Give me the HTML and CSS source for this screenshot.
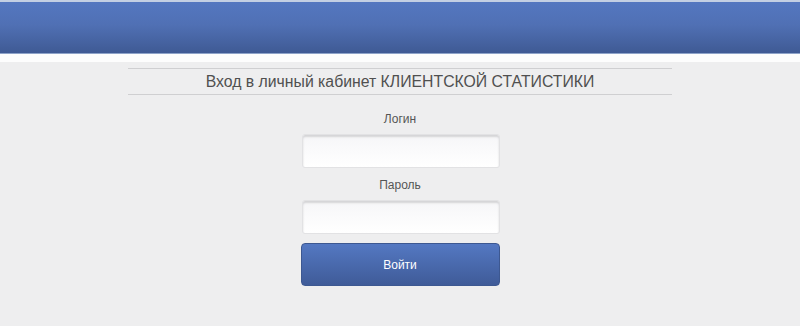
FILE: index.html
```html
<!DOCTYPE html>
<html lang="ru">
<head>
    <meta charset="UTF-8">
    <title>Вход в личный кабинет</title>
    <link rel="stylesheet" href="styles.css">
</head>
<body>
    <div class="header"></div>
    <div class="main">
        <h1 class="title">Вход в личный кабинет КЛИЕНТСКОЙ СТАТИСТИКИ</h1>
        <form class="login-form">
            <label class="field-label" for="login">Логин</label>
            <input class="field" type="text" id="login">
            <label class="field-label" for="password">Пароль</label>
            <input class="field field-last" type="password" id="password">
            <button class="submit" type="button">Войти</button>
        </form>
    </div>
</body>
</html>
```

FILE: styles.css
```css
html, body {
    margin: 0;
    padding: 0;
}
body {
    background-color: #eeeeef;
    font-family: "Liberation Sans", Arial, sans-serif;
}
.header {
    height: 51px;
    border-top: 2px solid #c3cfe3;
    border-bottom: 1px solid #8ea3c9;
    background: linear-gradient(to bottom, #5477c0 0%, #5070b4 45%, #3f5a94 100%);
    margin-bottom: 8px;
    box-shadow: 0 8px 0 #fdfdfd;
}
.main {
    padding-top: 6px;
}
.title {
    width: 544px;
    margin: 0 auto;
    border-top: 1px solid #cfcfd1;
    border-bottom: 1px solid #cfcfd1;
    text-align: center;
    font-size: 15.8px;
    font-weight: normal;
    color: #505050;
    line-height: 25px;
}
.login-form {
    width: 199px;
    margin: 0 auto;
    display: flex;
    flex-direction: column;
    align-items: center;
    padding-top: 17px;
}
.field-label {
    font-size: 12px;
    color: #555;
    line-height: 14px;
    margin-bottom: 8px;
}
.field {
    box-sizing: border-box;
    width: 198px;
    height: 34px;
    border: 1px solid #e2e2e4;
    border-radius: 3px;
    background: linear-gradient(to bottom, #f6f6f8, #ffffff);
    box-shadow: inset 0 2px 2px #d4d4d6;
    margin-bottom: 10px;
    margin-left: 1px;
}
.field-last {
    margin-bottom: 9px;
}
.submit {
    width: 199px;
    height: 43px;
    border: 1px solid #3d5891;
    border-radius: 4px;
    background: linear-gradient(to bottom, #5478c2, #3f5b98);
    color: #fff;
    font-family: "Liberation Sans", Arial, sans-serif;
    font-size: 12px;
    cursor: pointer;
}
```
